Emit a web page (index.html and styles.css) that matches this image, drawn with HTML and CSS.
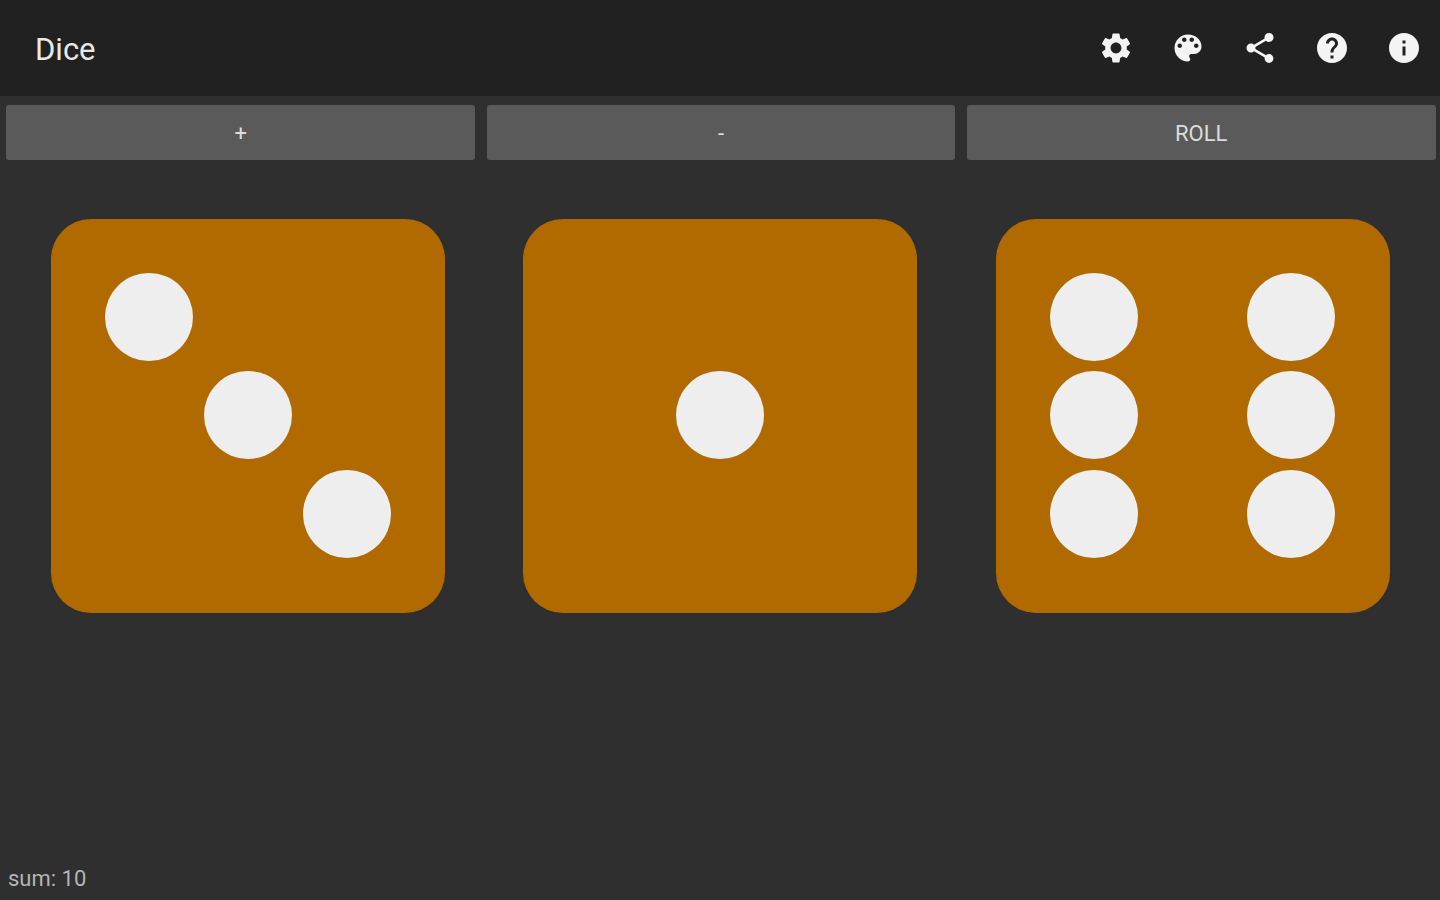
FILE: index.html
```html
<!DOCTYPE html>
<html lang="en">
<head>
    <meta charset="UTF-8">
    <meta name="viewport" content="width=device-width, initial-scale=1.0">
    <title>Dice</title>
    <link rel="stylesheet" href="styles.css">
</head>
<body>
    <header class="action-bar">
        <h1 class="app-title">Dice</h1>
        <nav class="actions">
            <button class="action" aria-label="Settings">
                <svg class="icon" viewBox="0 0 24 24"><path d="M19.14 12.94c.04-.3.06-.61.06-.94 0-.32-.02-.64-.07-.94l2.03-1.58c.18-.14.23-.41.12-.61l-1.92-3.32c-.12-.22-.37-.29-.59-.22l-2.39.96c-.5-.38-1.03-.7-1.62-.94l-.36-2.54c-.04-.24-.24-.41-.48-.41h-3.84c-.24 0-.43.17-.47.41l-.36 2.54c-.59.24-1.13.57-1.62.94l-2.39-.96c-.22-.08-.47 0-.59.22L2.74 8.87c-.12.21-.08.47.12.61l2.03 1.58c-.05.3-.09.63-.09.94s.02.64.07.94l-2.03 1.58c-.18.14-.23.41-.12.61l1.92 3.32c.12.22.37.29.59.22l2.39-.96c.5.38 1.03.7 1.62.94l.36 2.54c.05.24.24.41.48.41h3.84c.24 0 .44-.17.47-.41l.36-2.54c.59-.24 1.13-.56 1.62-.94l2.39.96c.22.08.47 0 .59-.22l1.92-3.32c.12-.22.07-.47-.12-.61l-2.01-1.58zM12 15.6c-1.98 0-3.6-1.62-3.6-3.6s1.62-3.6 3.6-3.6 3.6 1.62 3.6 3.6-1.62 3.6-3.6 3.6z"/></svg>
            </button>
            <button class="action" aria-label="Theme">
                <svg class="icon" viewBox="0 0 24 24"><path d="M12 3c-4.97 0-9 4.03-9 9s4.03 9 9 9c.83 0 1.5-.67 1.5-1.5 0-.39-.15-.74-.39-1.01-.23-.26-.38-.61-.38-.99 0-.83.67-1.5 1.5-1.5H16c2.76 0 5-2.24 5-5 0-4.42-4.03-8-9-8zm-5.5 9c-.83 0-1.5-.67-1.5-1.5S5.67 9 6.5 9 8 9.67 8 10.5 7.33 12 6.5 12zm3-4C8.67 8 8 7.33 8 6.5S8.67 5 9.5 5s1.5.67 1.5 1.5S10.33 8 9.5 8zm5 0c-.83 0-1.5-.67-1.5-1.5S13.67 5 14.5 5s1.5.67 1.5 1.5S15.33 8 14.5 8zm3 4c-.83 0-1.5-.67-1.5-1.5S16.67 9 17.5 9s1.5.67 1.5 1.5-.67 1.5-1.5 1.5z"/></svg>
            </button>
            <button class="action" aria-label="Share">
                <svg class="icon" viewBox="0 0 24 24"><path d="M18 16.08c-.76 0-1.44.3-1.96.77L8.91 12.7c.05-.23.09-.46.09-.7s-.04-.47-.09-.7l7.05-4.11c.54.5 1.25.81 2.04.81 1.66 0 3-1.34 3-3s-1.34-3-3-3-3 1.34-3 3c0 .24.04.47.09.7L8.04 9.81C7.5 9.31 6.79 9 6 9c-1.66 0-3 1.34-3 3s1.34 3 3 3c.79 0 1.5-.31 2.04-.81l7.12 4.16c-.05.21-.08.43-.08.65 0 1.61 1.31 2.92 2.92 2.92s2.92-1.31 2.92-2.92-1.31-2.92-2.92-2.92z"/></svg>
            </button>
            <button class="action" aria-label="Help">
                <svg class="icon" viewBox="0 0 24 24"><path d="M12 2C6.48 2 2 6.48 2 12s4.48 10 10 10 10-4.48 10-10S17.52 2 12 2zm1 17h-2v-2h2v2zm2.07-7.75l-.9.92C13.45 12.9 13 13.5 13 15h-2v-.5c0-1.1.45-2.1 1.17-2.83l1.24-1.26c.37-.36.59-.86.59-1.41 0-1.1-.9-2-2-2s-2 .9-2 2H8c0-2.21 1.79-4 4-4s4 1.79 4 4c0 .88-.36 1.68-.93 2.25z"/></svg>
            </button>
            <button class="action" aria-label="About">
                <svg class="icon" viewBox="0 0 24 24"><path d="M12 2C6.48 2 2 6.48 2 12s4.48 10 10 10 10-4.48 10-10S17.52 2 12 2zm1 15h-2v-6h2v6zm0-8h-2V7h2v2z"/></svg>
            </button>
        </nav>
    </header>

    <main class="content">
        <div class="controls">
            <button class="btn">+</button>
            <button class="btn">-</button>
            <button class="btn">ROLL</button>
        </div>

        <div class="dice-row">
            <div class="die">
                <span class="pip col-1 row-1"></span>
                <span class="pip col-2 row-2"></span>
                <span class="pip col-3 row-3"></span>
            </div>
            <div class="die">
                <span class="pip col-2 row-2"></span>
            </div>
            <div class="die">
                <span class="pip col-1 row-1"></span>
                <span class="pip col-3 row-1"></span>
                <span class="pip col-1 row-2"></span>
                <span class="pip col-3 row-2"></span>
                <span class="pip col-1 row-3"></span>
                <span class="pip col-3 row-3"></span>
            </div>
        </div>

        <p class="sum">sum: 10</p>
    </main>
</body>
</html>
```

FILE: styles.css
```css
body {
    font-family: Roboto, "Liberation Sans", sans-serif;
    margin: 0;
    height: 900px;
    overflow: hidden;
    display: flex;
    flex-direction: column;
    background: #2f2f2f;
}
.action-bar {
    height: 96px;
    flex: none;
    display: flex;
    align-items: center;
    justify-content: space-between;
    padding: 0 0 0 35px;
    background: #212121;
}
.app-title {
    margin: 0;
    padding-top: 2px;
    font-size: 31px;
    font-weight: 400;
    color: #e8e8e8;
}
.actions {
    display: flex;
}
.action {
    width: 72px;
    height: 96px;
    padding: 0;
    border: none;
    background: none;
    display: flex;
    align-items: center;
    justify-content: center;
}
.icon {
    width: 36px;
    height: 36px;
    fill: #f4f4f4;
}
.content {
    flex: 1;
    display: flex;
    flex-direction: column;
}
.controls {
    display: grid;
    grid-template-columns: repeat(3, 1fr);
    gap: 11.5px;
    padding: 9px 4.5px 0 6.4px;
}
.btn {
    height: 55px;
    padding: 2px 0 0;
    border: none;
    border-radius: 3px;
    background: #5a5a5b;
    color: #dcdcdc;
    font-family: inherit;
    font-size: 22px;
}
.dice-row {
    display: flex;
    justify-content: space-between;
    padding: 58.5px 50.5px 0 51px;
}
.die {
    width: 394px;
    height: 394px;
    box-sizing: border-box;
    padding: 49px;
    border-radius: 40px;
    background: #b06a00;
    display: grid;
    grid-template-columns: repeat(3, 1fr);
    grid-template-rows: repeat(3, 1fr);
    place-items: center;
}
.pip {
    width: 88px;
    height: 88px;
    border-radius: 50%;
    background: #eeeeee;
}
.col-1 { grid-column: 1; }
.col-2 { grid-column: 2; }
.col-3 { grid-column: 3; }
.row-1 { grid-row: 1; }
.row-2 { grid-row: 2; }
.row-3 { grid-row: 3; }
.sum {
    margin: auto 0 9px 8px;
    font-size: 22px;
    color: #b4b4b4;
}
```
